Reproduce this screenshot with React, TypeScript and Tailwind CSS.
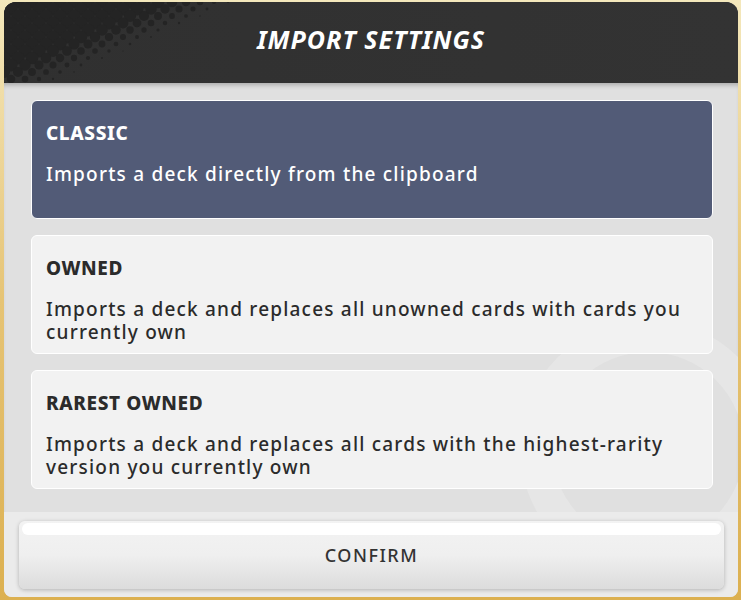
import React from "react";

const font = { fontFamily: '"Noto Sans", "Open Sans", sans-serif' };

const options = [
  { title: "CLASSIC", desc: "Imports a deck directly from the clipboard", active: true },
  { title: "OWNED", desc: "Imports a deck and replaces all unowned cards with cards you currently own", active: false },
  { title: "RAREST OWNED", desc: "Imports a deck and replaces all cards with the highest-rarity version you currently own", active: false },
];

function Halftone() {
  const dots = [];
  for (let r = 0; r < 13; r++) {
    for (let c = 0; c < 18; c++) {
      const x = c * 14 + (r % 2 ? 7 : 0);
      const y = r * 7;
      // dots shrink toward the bottom-right
      const t = 0.42 * x + 0.95 * y;
      const size = Math.min(6.5, (100 - t) * 0.18);
      if (size > 0.6) dots.push(<circle key={r + "-" + c} cx={x} cy={y} r={size} fill="#242424" />);
    }
  }
  return (
    <svg className="absolute left-0 top-0" width="240" height="81" viewBox="0 0 240 81">
      {dots}
    </svg>
  );
}

export default function App() {
  return (
    <div className="w-[741px] h-[600px] bg-gradient-to-b from-[#f4e8bc] via-[#e6c475] to-[#dcb050] pt-[2px] pl-[4px] pr-[3px] pb-[3px]" style={font}>
      <div className="h-full rounded-[12px] rounded-b-[8px] overflow-hidden flex flex-col bg-[#e0e0e0]">
        <div className="relative h-[81px] shrink-0 bg-[#333333] flex items-center justify-center overflow-hidden">
          <div className="absolute inset-0 bg-gradient-to-r from-[#303030] to-[#333333]" />
          <Halftone />
          <h1 className="relative -mt-[6px] text-white italic font-bold text-[25px] tracking-[1px]">IMPORT SETTINGS</h1>
        </div>
        <div className="relative flex-1 flex flex-col gap-[16px] pt-[17px] pl-[27px] pr-[25px] shadow-[inset_0_5px_5px_-3px_rgba(0,0,0,0.25)] overflow-hidden">
          <svg className="absolute right-[-50px] top-[225px]" width="280" height="280" viewBox="0 0 280 280">
            <circle cx="140" cy="140" r="112" fill="none" stroke="#e6e6e6" strokeWidth="32" />
          </svg>
          {options.map((o) => (
            <div
              key={o.title}
              className={
                "relative h-[119px] rounded-[6px] border border-white px-[14px] pt-[20px] " +
                (o.active ? "bg-[#525b77] text-white" : "bg-[#f2f2f2] text-[#2b2b2b]")
              }
            >
              <div className="font-extrabold text-[19px] leading-[24px] tracking-[0.6px]">{o.title}</div>
              <div className="mt-[18px] font-medium text-[19px] leading-[23px] tracking-[1.2px]">{o.desc}</div>
            </div>
          ))}
        </div>
        <div className="h-[85px] shrink-0 bg-[#ebebeb] pt-[9px] pl-[15px] pr-[14px]">
          <div className="relative h-[68px] rounded-[6px] bg-gradient-to-b from-[#f3f3f3] via-[#efefef] to-[#dcdcdc] shadow-[0_1px_4px_rgba(0,0,0,0.25)] flex items-center justify-center">
            <div className="absolute left-[3px] right-[3px] top-[2px] h-[12px] rounded-[6px] bg-white" />
            <span className="relative text-[18px] font-medium tracking-[1.5px] text-[#333333]">CONFIRM</span>
          </div>
        </div>
      </div>
    </div>
  );
}
